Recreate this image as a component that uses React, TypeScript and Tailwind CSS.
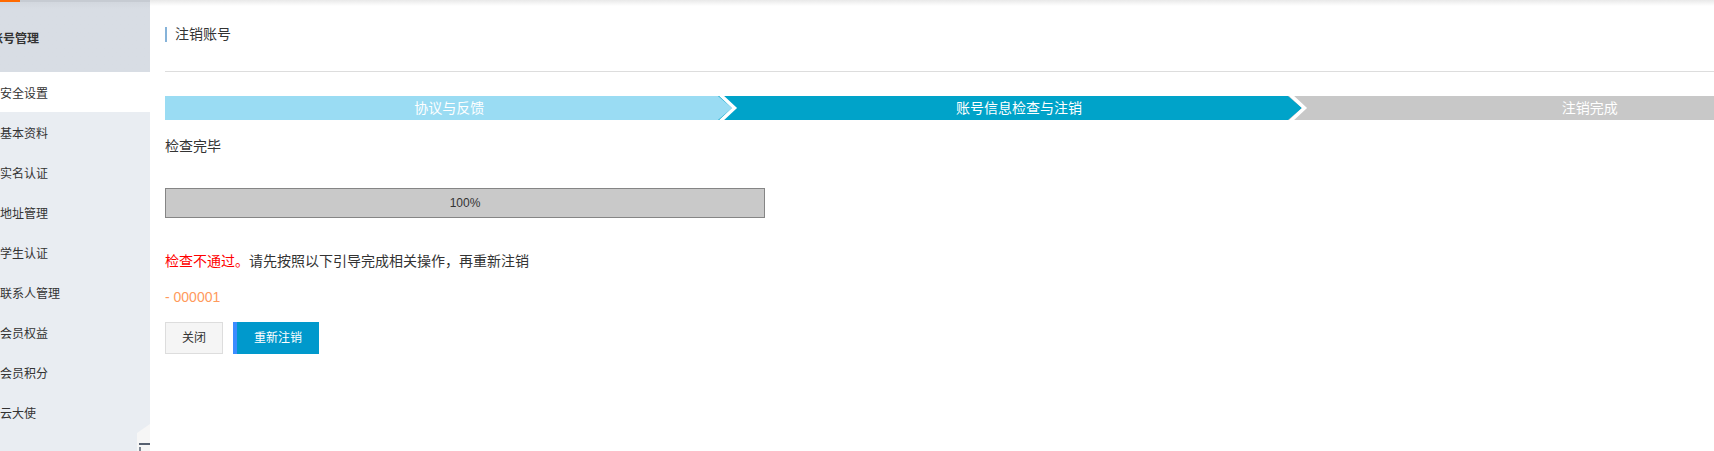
import React from 'react'

const menu = ['安全设置', '基本资料', '实名认证', '地址管理', '学生认证', '联系人管理', '会员权益', '会员积分', '云大使']

const steps = [
  { label: '协议与反馈', bg: 'bg-[#9adcf3]', w: 'w-[569px]', fill: '' },
  { label: '账号信息检查与注销', bg: 'bg-[#00a3c9]', w: 'w-[571px]', fill: '#00a3c9' },
  { label: '注销完成', bg: 'bg-[#c8c8c8]', w: 'w-[571px]', fill: '#c8c8c8' },
]

function Chevron({ fill }: { fill: string }) {
  // notch cut into the previous step + white separator line
  return (
    <svg className="absolute left-[-16px] top-0" width="22" height="24" viewBox="0 0 22 24">
      <polygon points="0,0 22,0 22,24 0,24 14,12" fill={fill} />
      <polyline points="2.5,-1 16.5,12 2.5,25" fill="none" stroke="#fff" strokeWidth="3.5" />
    </svg>
  )
}

function Sidebar() {
  return (
    <aside className="relative w-[150px] shrink-0 h-[451px] bg-[#e9edf2] overflow-hidden">
      <div className="flex h-[2px]">
        <div className="w-[20px] bg-[#ff6a00]" />
        <div className="flex-1 bg-[#c6cbd2]" />
      </div>
      <div className="h-[70px] bg-linear-to-b from-[#d2d7de] to-[#d8dde4] to-[10%] flex items-center pt-[3px]">
        <span className="ml-[-9px] text-[12px] font-bold text-[#333]">账号管理</span>
      </div>
      <ul>
        {menu.map((m, i) => (
          <li
            key={m}
            className={`h-[40px] flex items-center pt-[3px] text-[12px] text-[#333] ${i === 0 ? 'bg-white' : ''}`}
          >
            {m}
          </li>
        ))}
      </ul>
      <svg className="absolute left-[137px] top-[424px]" width="13" height="27" viewBox="0 0 13 27">
        <polygon points="0,9 13,0 13,27 0,27" fill="#f6f6f6" />
        <rect x="2" y="19" width="11" height="2" fill="#566070" />
        <rect x="2" y="23" width="2" height="4" fill="#7f8894" />
      </svg>
    </aside>
  )
}

export default function App() {
  return (
    <div className="flex w-full h-[451px] overflow-hidden bg-white font-['Liberation_Sans','Noto_Sans_CJK_SC',sans-serif] text-[#333]">
      <Sidebar />

      <main className="flex-1 min-w-0">
        <div className="h-[6px] bg-linear-to-b from-[#e9e9e9] to-white" />
        <div className="pl-[15px] w-[1725px]">
          <div className="mt-[21px] h-[15px] flex items-center">
            <div className="w-[2px] h-[15px] bg-[#86b3d9]" />
            <h2 className="ml-[8px] text-[14px] leading-[15px]">注销账号</h2>
          </div>

          <div className="mt-[29px] h-px bg-[#dddddd]" />

          <div className="mt-[24px] flex h-[24px]">
            {steps.map((s) => (
              <div
                key={s.label}
                className={`relative ${s.w} ${s.bg} flex items-center justify-center text-[14px] text-white`}
              >
                {s.fill && <Chevron fill={s.fill} />}
                <span className="relative">{s.label}</span>
              </div>
            ))}
          </div>

          <p className="mt-[16px] text-[14px] leading-[20px]">检查完毕</p>

          <div className="mt-[32px] w-[600px] h-[30px] border border-[#858585] bg-[#c9c9c9] flex items-center justify-center text-[12px]">
            100%
          </div>

          <p className="mt-[33px] text-[14px] leading-[20px]">
            <span className="text-[#ff0000]">检查不通过。</span>请先按照以下引导完成相关操作，再重新注销
          </p>

          <p className="mt-[16px] text-[14px] leading-[20px] text-[#ff9a5c]">- 000001</p>

          <div className="mt-[15px] flex gap-[10px]">
            <button className="w-[58px] h-[32px] border border-[#dddddd] bg-[#f5f5f5] text-[12px] text-[#333]">
              关闭
            </button>
            <button className="w-[86px] h-[32px] border-l-4 border-[#3b8cff] bg-[#0099cc] text-[12px] text-white">
              重新注销
            </button>
          </div>
        </div>
      </main>
    </div>
  )
}
